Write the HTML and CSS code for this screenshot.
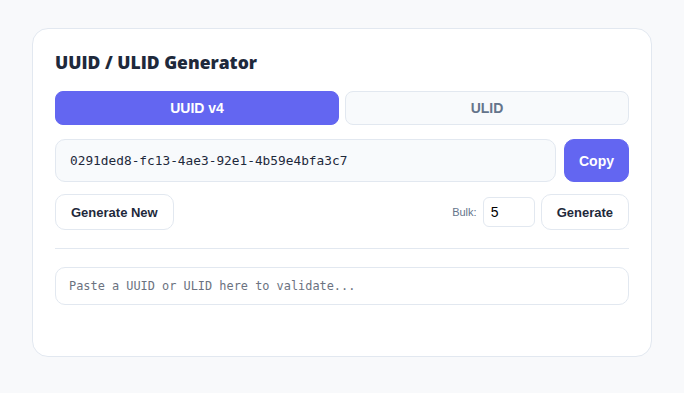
FILE: index.html
```html
<!DOCTYPE html>
<html lang="en">
<head>
    <meta charset="UTF-8">
    <meta name="viewport" content="width=device-width, initial-scale=1.0">
    <title>UUID / ULID Generator</title>
    <link rel="stylesheet" href="styles.css">
</head>
<body>
    <div class="card">
        <h1>UUID / ULID Generator</h1>
        <div class="tabs">
            <button class="tab active">UUID v4</button>
            <button class="tab">ULID</button>
        </div>
        <div class="output-row">
            <div class="output">0291ded8-fc13-4ae3-92e1-4b59e4bfa3c7</div>
            <button class="btn primary">Copy</button>
        </div>
        <div class="actions">
            <button class="btn">Generate New</button>
            <div class="bulk">
                <label for="bulkCount">Bulk:</label>
                <input type="number" id="bulkCount" value="5">
                <button class="btn">Generate</button>
            </div>
        </div>
        <hr class="divider">
        <input type="text" class="validate" placeholder="Paste a UUID or ULID here to validate...">
        <div class="result"></div>
    </div>
</body>
</html>
```

FILE: styles.css
```css
body {
    margin: 0;
    padding: 28px 32px;
    background-color: #f8f9fb;
    font-family: "Liberation Sans", Arial, sans-serif;
}
.card {
    background-color: #fff;
    border: 1px solid #e2e8f0;
    border-radius: 16px;
    padding: 22px 22px 0;
}
h1 {
    font-family: "Open Sans", sans-serif;
    font-size: 17.5px;
    font-weight: 800;
    color: #1e293b;
    margin: 0 0 17px;
    line-height: 23px;
}
.tabs {
    display: flex;
    gap: 6px;
    margin-bottom: 14px;
}
.tab {
    flex: 1;
    height: 34px;
    border: 1px solid #e2e8f0;
    border-radius: 8px;
    background-color: #f8fafc;
    color: #64748b;
    font-family: inherit;
    font-size: 14px;
    font-weight: 700;
}
.tab.active {
    background-color: #6366f1;
    border-color: #6366f1;
    color: #fff;
}
.output-row {
    display: flex;
    gap: 8px;
    margin-bottom: 12px;
}
.output {
    flex: 1;
    height: 43px;
    box-sizing: border-box;
    display: flex;
    align-items: center;
    padding: 0 14px;
    background-color: #f8fafc;
    border: 1px solid #e2e8f0;
    border-radius: 10px;
    font-family: "DejaVu Sans Mono", monospace;
    font-size: 12.8px;
    color: #1e293b;
}
.btn {
    height: 36px;
    padding: 0 15px;
    border: 1px solid #e2e8f0;
    border-radius: 10px;
    background-color: #fff;
    color: #1e293b;
    font-family: inherit;
    font-size: 13px;
    font-weight: 700;
}
.btn.primary {
    height: 43px;
    width: 65px;
    padding: 0;
    font-size: 14px;
    background-color: #6366f1;
    border-color: #6366f1;
    color: #fff;
}
.actions {
    display: flex;
    justify-content: space-between;
    align-items: center;
}
.bulk {
    display: flex;
    align-items: center;
    gap: 6px;
}
.bulk label {
    font-size: 11px;
    color: #64748b;
}
.bulk input {
    width: 52px;
    height: 30px;
    box-sizing: border-box;
    border: 1px solid #e2e8f0;
    border-radius: 6px;
    padding: 0 7px;
    font-family: "Liberation Sans", Arial, sans-serif;
    font-size: 14px;
    color: #000;
}
.divider {
    border: none;
    border-top: 1px solid #e2e8f0;
    margin: 18px 0;
}
.validate {
    display: block;
    width: 100%;
    height: 38px;
    box-sizing: border-box;
    border: 1px solid #e2e8f0;
    border-radius: 10px;
    padding: 0 13px;
    font-family: "DejaVu Sans Mono", monospace;
    font-size: 11.9px;
}
.validate::placeholder {
    color: #6b7280;
}
.result {
    height: 51px;
}
```
